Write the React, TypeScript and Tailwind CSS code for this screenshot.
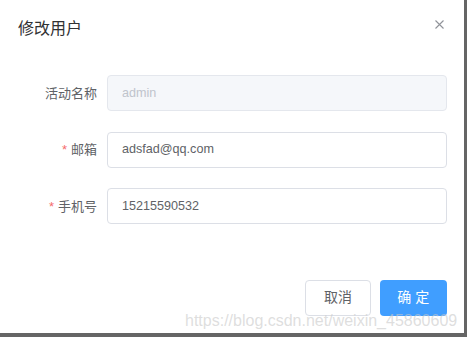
const font = { fontFamily: '"Liberation Sans", "Noto Sans CJK SC", sans-serif' };

interface FieldProps {
  label: string;
  value: string;
  required?: boolean;
  disabled?: boolean;
}

const Field = ({ label, value, required, disabled }: FieldProps) => (
  <div className="flex items-center h-[36px] mb-[20.5px]">
    <label className="w-[79px] pr-0 text-right text-[13px] text-[#606266] leading-none whitespace-nowrap">
      {required && <span className="text-[#f56c6c] mr-[4px]">*</span>}
      {label}
    </label>
    <div
      className={
        disabled
          ? "ml-[10px] flex-1 h-[36px] flex items-center px-[14px] rounded-[4px] border border-[#e4e7ed] bg-[#f5f7fa] text-[#c0c4cc] text-[12.6px]"
          : "ml-[10px] flex-1 h-[36px] flex items-center px-[14px] rounded-[4px] border border-[#dcdfe6] bg-white text-[#606266] text-[12.6px]"
      }
    >
      {value}
    </div>
  </div>
);

export default function App() {
  return (
    <div className="w-[467px] h-[337px] bg-[#656565] overflow-hidden" style={font}>
      <div className="relative w-[464px] h-[333px] bg-white">
        {/* header */}
        <div className="flex justify-between items-start pl-[18px] pr-[20px] pt-[17px]">
          <span className="text-[16px] leading-[24px] text-[#303133]">修改用户</span>
          <svg width="9" height="9" viewBox="0 0 9 9" className="mt-[3px]">
            <path d="M0.5 0.5 L8.5 8.5 M8.5 0.5 L0.5 8.5" stroke="#909399" strokeWidth="1.1" />
          </svg>
        </div>

        {/* form */}
        <div className="pl-[18px] pr-[17.5px] pt-[34px]">
          <Field label="活动名称" value="admin" disabled />
          <Field label="邮箱" value="adsfad@qq.com" required />
          <Field label="手机号" value="15215590532" required />
        </div>

        {/* footer */}
        <div className="flex justify-end gap-[9px] pr-[17.5px] pt-[35.5px]">
          <button className="w-[66px] h-[35.5px] rounded-[4px] border border-[#dcdfe6] bg-white text-[14px] text-[#606266]">
            取消
          </button>
          <button className="w-[66.5px] h-[35.5px] rounded-[4px] bg-[#409eff] text-[14px] text-white">
            确 定
          </button>
        </div>

        {/* watermark */}
        <div className="absolute left-[185px] top-[312.5px] text-[16px] leading-none text-[rgba(200,200,200,0.6)] whitespace-nowrap pointer-events-none">
          https://blog.csdn.net/weixin_45860609
        </div>
      </div>
    </div>
  );
}
